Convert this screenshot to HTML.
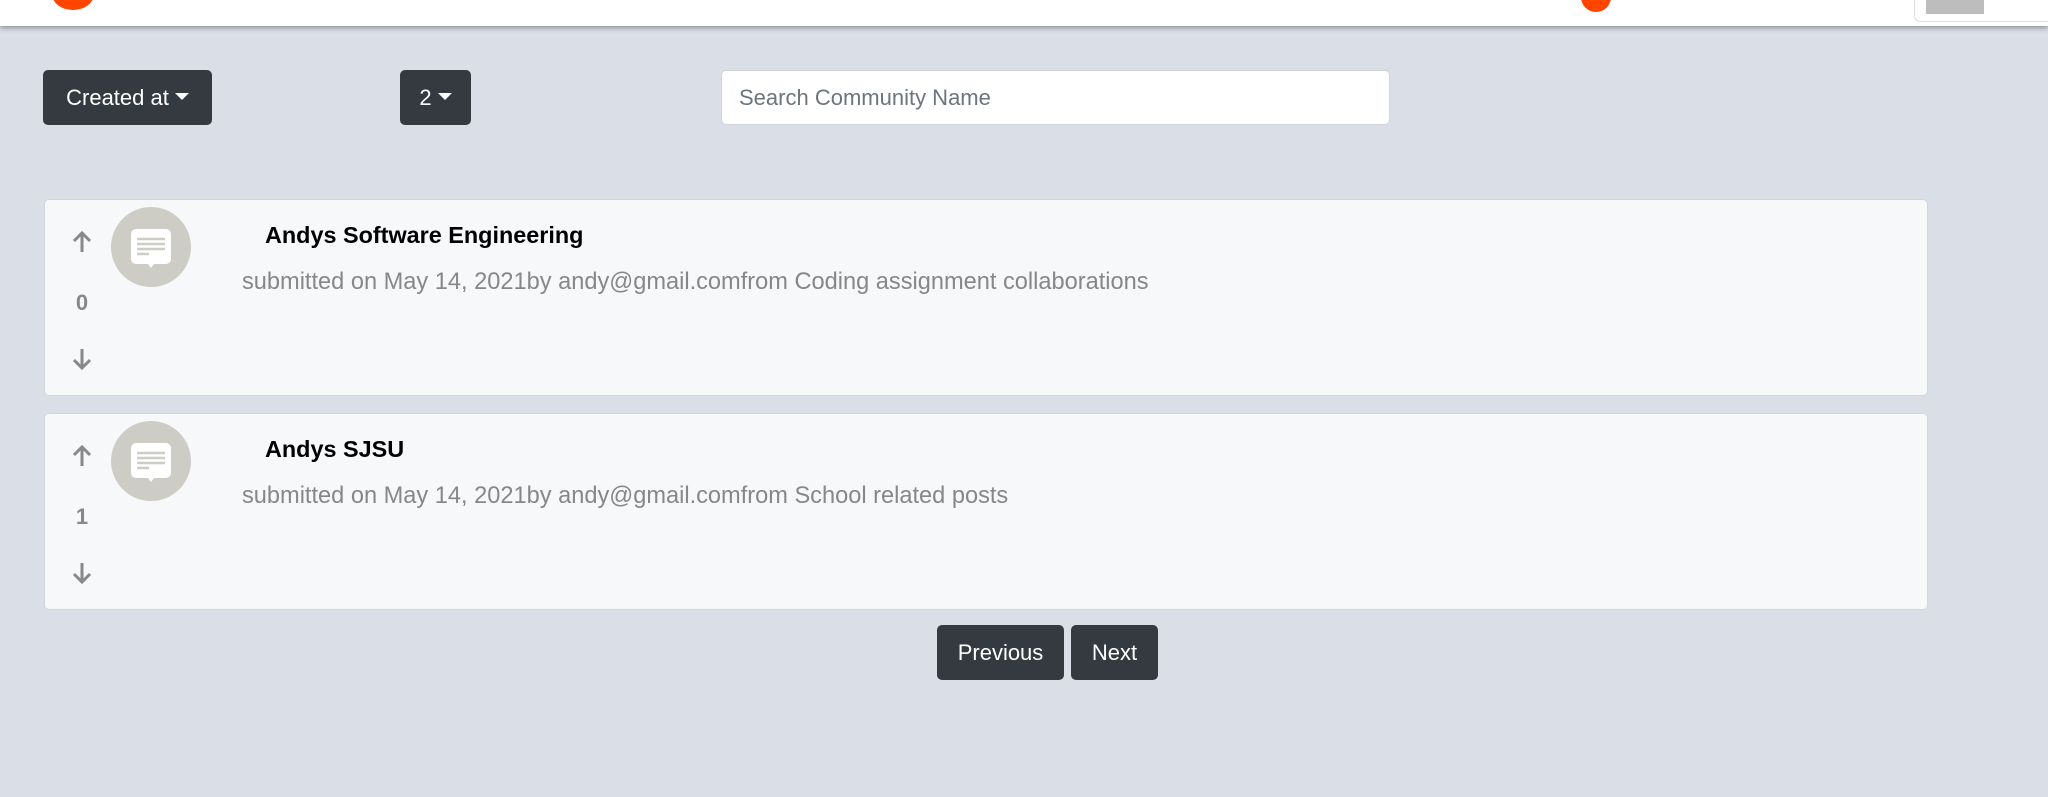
<!DOCTYPE html>
<html><head><meta charset="utf-8"><style>
*{box-sizing:border-box;margin:0;padding:0}
body{width:2048px;height:797px;background:#dadee6;font-family:"Liberation Sans",sans-serif;position:relative;overflow:hidden}
.hdr{position:absolute;left:0;top:0;width:2048px;height:26px;background:#fff;box-shadow:0 2px 5px rgba(0,0,0,.35)}
.btn{position:absolute;background:#343a40;color:#fff;border-radius:5px;font-size:22px;display:flex;align-items:center;justify-content:center}
.caret{display:inline-block;width:0;height:0;border-left:7px solid transparent;border-right:7px solid transparent;border-top:7px solid #fff;margin-left:6px;margin-top:-3px}
.search{position:absolute;left:721px;top:70px;width:669px;height:55px;background:#fff;border:1px solid #ced4da;border-radius:5px;font-size:22px;color:#6c757d;padding-left:17px;line-height:53px}
.card{position:absolute;left:44px;width:1884px;height:197px;background:#f7f8fa;border:1px solid #d3d6da;border-radius:5px}
.arr{position:absolute;left:26px;width:22px;height:24px}
.cnt{position:absolute;left:26px;width:22px;text-align:center;font-size:22px;font-weight:bold;color:#888}
.circ{position:absolute;left:66px;width:80px;height:80px;border-radius:50%;background:#cdcdc6}
.title{position:absolute;left:220px;font-size:23.4px;font-weight:bold;color:#000}
.sub{position:absolute;left:197px;font-size:23.6px;color:#878787}
</style></head><body>
<div class="hdr">
<div style="position:absolute;left:52px;top:-22px;width:42px;height:32px;border-radius:50%;background:#ff4500"></div>
<div style="position:absolute;left:1581px;top:-8px;width:30px;height:20px;background:#ff4500;border-radius:0 0 15px 15px"></div>
<div style="position:absolute;left:1914px;top:-2px;width:140px;height:24px;background:#fff;border:1px solid #ddd;border-radius:0 0 0 6px"></div>
<div style="position:absolute;left:1926px;top:0;width:58px;height:14px;background:#bdbdbd"></div>
</div>
<div class="btn" style="left:43px;top:70px;width:169px;height:55px">Created at<span class="caret"></span></div>
<div class="btn" style="left:400px;top:70px;width:71px;height:55px">2<span class="caret"></span></div>
<div class="search">Search Community Name</div>

<div class="card" style="top:199px">
<svg class="arr" style="top:30px" viewBox="0 0 22 24"><path d="M11 22V3M3 11l8-8 8 8" stroke="#888" stroke-width="3" fill="none"/></svg>
<div class="cnt" style="top:90px">0</div>
<svg class="arr" style="top:147px" viewBox="0 0 22 24"><path d="M11 2v19M3 13l8 8 8-8" stroke="#888" stroke-width="3" fill="none"/></svg>
<div class="circ" style="top:7px"><svg width="80" height="80" viewBox="0 0 80 80"><rect x="20" y="22" width="40" height="35" rx="5" fill="#fff"/><path d="M37 57l3 4 3-4z" fill="#fff"/><path d="M26 32h28M26 37h28M26 42h28M26 47h12" stroke="#cdcdc6" stroke-width="2.5"/></svg></div>
<div class="title" style="top:22px">Andys Software Engineering</div>
<div class="sub" style="top:69px">submitted on May 14, 2021by andy@gmail.comfrom Coding assignment collaborations</div>
</div>

<div class="card" style="top:413px">
<svg class="arr" style="top:30px" viewBox="0 0 22 24"><path d="M11 22V3M3 11l8-8 8 8" stroke="#888" stroke-width="3" fill="none"/></svg>
<div class="cnt" style="top:90px">1</div>
<svg class="arr" style="top:147px" viewBox="0 0 22 24"><path d="M11 2v19M3 13l8 8 8-8" stroke="#888" stroke-width="3" fill="none"/></svg>
<div class="circ" style="top:7px"><svg width="80" height="80" viewBox="0 0 80 80"><rect x="20" y="22" width="40" height="35" rx="5" fill="#fff"/><path d="M37 57l3 4 3-4z" fill="#fff"/><path d="M26 32h28M26 37h28M26 42h28M26 47h12" stroke="#cdcdc6" stroke-width="2.5"/></svg></div>
<div class="title" style="top:22px">Andys SJSU</div>
<div class="sub" style="top:69px">submitted on May 14, 2021by andy@gmail.comfrom School related posts</div>
</div>

<div class="btn" style="left:937px;top:625px;width:127px;height:55px">Previous</div>
<div class="btn" style="left:1071px;top:625px;width:87px;height:55px">Next</div>
</body></html>
